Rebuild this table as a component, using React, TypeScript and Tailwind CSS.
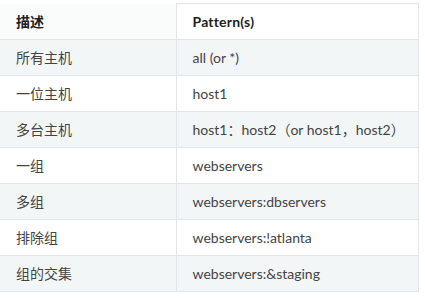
import React from "react";

const rows: [string, string][] = [
  ["所有主机", "all (or *)"],
  ["一位主机", "host1"],
  ["多台主机", "host1：host2（or host1，host2）"],
  ["一组", "webservers"],
  ["多组", "webservers:dbservers"],
  ["排除组", "webservers:!atlanta"],
  ["组的交集", "webservers:&staging"],
];

export default function App() {
  return (
    <div
      className="w-[425px] h-[298px] bg-white pt-[3px] text-[14px] text-[#333]"
      style={{ fontFamily: 'Lato, "Noto Sans CJK SC", sans-serif' }}
    >
      <table className="w-[419px] border-collapse">
        <thead>
          <tr className="h-[36px]">
            <th className="w-[176px] text-left font-bold pl-[16px] bg-[#fafbfb] border-b border-[#e3e6e8] text-[#222]">描述</th>
            <th className="text-left font-bold pl-[16px] bg-white border border-[#e3e6e8] text-[#222] tracking-[0.2px]">Pattern(s)</th>
          </tr>
        </thead>
        <tbody>
          {rows.map(([a, b], i) => (
            <tr key={i} className={`h-[36px] ${i % 2 === 0 ? "bg-[#f3f6f7]" : "bg-white"}`}>
              <td className="pl-[16px] border-b border-[#e3e6e8] text-[#444]">{a}</td>
              <td className="pl-[16px] border border-[#e3e6e8] text-[#444]">{b}</td>
            </tr>
          ))}
        </tbody>
      </table>
    </div>
  );
}
